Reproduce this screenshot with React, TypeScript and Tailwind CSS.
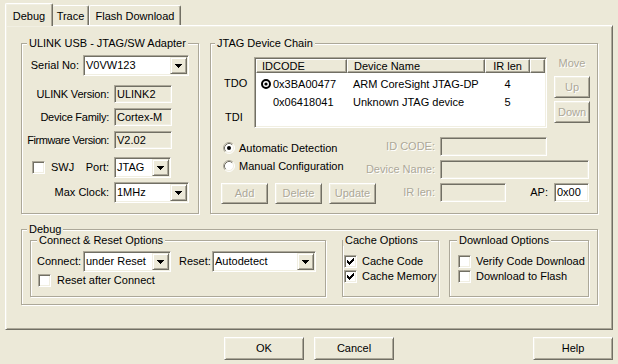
import React from "react";

const SUNKEN =
  "border border-t-[#ACA899] border-l-[#ACA899] border-b-white border-r-white shadow-[inset_1px_1px_0_#716F64,inset_-1px_-1px_0_#F1EFE2]";
const RAISED =
  "border border-t-white border-l-white border-b-[#716F64] border-r-[#716F64] shadow-[inset_1px_1px_0_#F1EFE2,inset_-1px_-1px_0_#ACA899]";
const ARROWBTN =
  "border border-t-[#F1EFE2] border-l-[#F1EFE2] border-b-[#716F64] border-r-[#716F64] shadow-[inset_1px_1px_0_#fff,inset_-1px_-1px_0_#ACA899]";
const HDR =
  "border border-t-white border-l-white border-b-[#716F64] border-r-[#716F64] shadow-[inset_-1px_-1px_0_#ACA899] bg-[#ECE9D8]";
const DIS = "text-[#ACA899] [text-shadow:1px_1px_0_#fff]";

function Arrow() {
  return (
    <svg width="7" height="4" viewBox="0 0 7 4" shapeRendering="crispEdges">
      <path d="M0 0h7v1H0z M1 1h5v1H1z M2 2h3v1H2z M3 3h1v1H3z" fill="#000" />
    </svg>
  );
}

function Combo({ value, className }: { value: string; className: string }) {
  return (
    <div className={`flex h-[21px] bg-white p-[1px] shrink-0 ${SUNKEN} ${className}`}>
      <div className="flex-1 pl-[1px] leading-[17px] whitespace-nowrap overflow-hidden">{value}</div>
      <div className={`w-[17px] h-[17px] flex items-center justify-center bg-[#ECE9D8] ${ARROWBTN}`}>
        <Arrow />
      </div>
    </div>
  );
}

function Field({ value, className, white }: { value?: string; className: string; white?: boolean }) {
  return (
    <div
      className={`pl-[2px] whitespace-nowrap shrink-0 flex items-center ${SUNKEN} ${
        white ? "bg-white" : "bg-[#ECE9D8]"
      } ${className}`}
    >
      {value}
    </div>
  );
}

function Btn({ label, className, disabled }: { label: string; className: string; disabled?: boolean }) {
  return (
    <div
      className={`flex items-center justify-center bg-[#ECE9D8] shrink-0 ${RAISED} ${disabled ? DIS : ""} ${className}`}
    >
      {label}
    </div>
  );
}

function Check({ checked, className = "" }: { checked?: boolean; className?: string }) {
  return (
    <div className={`w-[13px] h-[13px] bg-white shrink-0 flex items-center justify-center ${SUNKEN} ${className}`}>
      {checked && (
        <svg width="7" height="7" viewBox="0 0 7 7" shapeRendering="crispEdges">
          <path
            d="M0 2h1v3H0z M1 3h1v3H1z M2 4h1v3H2z M3 3h1v3H3z M4 2h1v3H4z M5 1h1v3H5z M6 0h1v3H6z"
            fill="#000"
          />
        </svg>
      )}
    </div>
  );
}

function Radio({ checked, className = "" }: { checked?: boolean; className?: string }) {
  return (
    <svg width="12" height="12" viewBox="0 0 12 12" className={`shrink-0 ${className}`}>
      <circle cx="6" cy="6" r="5" fill="#fff" />
      <path d="M9.89 2.11 A5.5 5.5 0 0 0 2.11 9.89" stroke="#ACA899" fill="none" />
      <path d="M9.18 2.82 A4.5 4.5 0 0 0 2.82 9.18" stroke="#716F64" fill="none" />
      <path d="M2.11 9.89 A5.5 5.5 0 0 0 9.89 2.11" stroke="#fff" fill="none" />
      <path d="M2.82 9.18 A4.5 4.5 0 0 0 9.18 2.82" stroke="#F1EFE2" fill="none" />
      {checked && <circle cx="6" cy="6" r="2" fill="#000" />}
    </svg>
  );
}

function Group({
  title,
  className,
  legendClass,
  children,
}: {
  title: string;
  className: string;
  legendClass: string;
  children?: React.ReactNode;
}) {
  return (
    <fieldset
      className={`border border-[#ACA899] shadow-[inset_1px_1px_0_#fff,1px_1px_0_#fff] min-w-0 p-0 m-0 shrink-0 ${className}`}
    >
      <legend className={`px-[2px] leading-[11px] h-[11px] bg-[#ECE9D8] whitespace-nowrap ${legendClass}`}>
        {title}
      </legend>
      {children}
    </fieldset>
  );
}

function RowLabel({ text, className }: { text: string; className: string }) {
  return <div className={`flex justify-end whitespace-nowrap shrink-0 ${className}`}>{text}</div>;
}

function ListView() {
  return (
    <div className={`w-[293px] h-[71px] bg-white p-[1px] shrink-0 ${SUNKEN}`}>
      <div className="flex h-[14px] leading-[12px]">
        <div className={`w-[91px] pl-[5px] ${HDR}`}>IDCODE</div>
        <div className={`w-[138px] pl-[6px] ${HDR}`}>Device Name</div>
        <div className={`w-[45px] text-center ${HDR}`}>IR len</div>
        <div className={`flex-1 ${HDR}`}></div>
      </div>
      <div className="pt-[2px]">
        <div className="flex h-[18px] items-center">
          <div className="w-[91px] flex items-center">
            <svg width="10" height="10" viewBox="0 0 10 10" className="ml-[5px] shrink-0">
              <circle cx="5" cy="5" r="4" stroke="#000" strokeWidth="2" fill="#fff" />
              <circle cx="5" cy="5" r="1.6" fill="#000" />
            </svg>
            <span className="ml-[2px]">0x3BA00477</span>
          </div>
          <div className="w-[138px] pl-[6px] whitespace-nowrap">ARM CoreSight JTAG-DP</div>
          <div className="w-[45px] text-center">4</div>
        </div>
        <div className="flex h-[18px] items-center">
          <div className="w-[91px] pl-[17px]">0x06418041</div>
          <div className="w-[138px] pl-[6px] whitespace-nowrap">Unknown JTAG device</div>
          <div className="w-[45px] text-center">5</div>
        </div>
      </div>
    </div>
  );
}

export default function App() {
  return (
    <div className="w-[618px] h-[364px] bg-[#ECE9D8] font-['Liberation_Sans',Arial,sans-serif] text-[11px] leading-[13px] text-black overflow-hidden px-[5px] pt-[3px]">
      {/* Tabs */}
      <div className="flex items-end h-[22px]">
        <div className="relative z-10 -mb-[1px] h-[23px] w-[48px] pt-[2px] flex items-center justify-center bg-[#ECE9D8] rounded-t-[2px] border-t border-l border-r border-t-white border-l-white border-r-[#716F64] shadow-[inset_-1px_0_0_#ACA899,inset_1px_1px_0_#F1EFE2]">
          Debug
        </div>
        <div className="h-[20px] w-[36px] pt-[1px] flex items-center justify-center rounded-t-[2px] border-t border-r border-t-white border-r-[#716F64] shadow-[inset_-1px_0_0_#ACA899]">
          Trace
        </div>
        <div className="h-[20px] w-[92px] pt-[1px] flex items-center justify-center rounded-t-[2px] border-t border-l border-r border-t-white border-l-white border-r-[#716F64] shadow-[inset_-1px_0_0_#ACA899]">
          Flash Download
        </div>
      </div>

      {/* Panel */}
      <div className="w-[608px] h-[305px] pt-[12px] pl-[15px] border border-t-white border-l-white border-b-[#716F64] border-r-[#716F64] shadow-[inset_1px_1px_0_#F1EFE2,inset_-1px_-1px_0_#ACA899]">
        <div className="flex">
          {/* ULINK group */}
          <Group title="ULINK USB - JTAG/SW Adapter" className="w-[178px] h-[176px]" legendClass="ml-[5px]">
            <div className="flex items-center mt-[6px] h-[21px]">
              <RowLabel text="Serial No:" className="w-[57px]" />
              <Combo value="V0VW123" className="ml-[4px] w-[106px]" />
            </div>
            <div className="flex items-center mt-[9px]">
              <RowLabel text="ULINK Version:" className="w-[87px] tracking-[-0.2px]" />
              <Field value="ULINK2" className="ml-[5px] w-[58px] h-[18px]" />
            </div>
            <div className="flex items-center mt-[5px]">
              <RowLabel text="Device Family:" className="w-[87px] tracking-[-0.25px]" />
              <Field value="Cortex-M" className="ml-[5px] w-[58px] h-[18px]" />
            </div>
            <div className="flex items-center mt-[5px]">
              <RowLabel text="Firmware Version:" className="w-[87px] tracking-[-0.4px]" />
              <Field value="V2.02" className="ml-[5px] w-[58px] h-[18px]" />
            </div>
            <div className="flex items-center mt-[8px] h-[21px]">
              <div className="w-[87px] flex items-center shrink-0">
                <Check className="ml-[10px]" />
                <span className="ml-[6px]">SWJ</span>
                <span className="ml-auto">Port:</span>
              </div>
              <Combo value="JTAG" className="ml-[5px] w-[57px]" />
            </div>
            <div className="flex items-center mt-[4px] h-[21px]">
              <RowLabel text="Max Clock:" className="w-[87px]" />
              <Combo value="1MHz" className="ml-[5px] w-[75px]" />
            </div>
          </Group>

          {/* JTAG group */}
          <Group title="JTAG Device Chain" className="ml-[11px] w-[388px] h-[176px]" legendClass="ml-[4px]">
            <div className="flex mt-[8px]">
              <div className="w-[43px] pl-[13px] flex flex-col shrink-0">
                <span className="mt-[20px] leading-[13px]">TDO</span>
                <span className="mt-[21px] leading-[13px] pl-[1px]">TDI</span>
              </div>
              <ListView />
              <div className="ml-[7px] w-[36px] flex flex-col shrink-0">
                <div className={`text-center leading-[13px] ${DIS}`}>Move</div>
                <Btn label="Up" disabled className="mt-[6px] h-[22px]" />
                <Btn label="Down" disabled className="mt-[3px] h-[22px]" />
              </div>
            </div>
            <div className="flex">
              <div className="w-[165px] pl-[10px] pt-[11px] shrink-0">
                <div className="flex items-center h-[18px]">
                  <Radio checked className="ml-[2px]" />
                  <span className="ml-[4px] whitespace-nowrap">Automatic Detection</span>
                </div>
                <div className="flex items-center h-[18px]">
                  <Radio className="ml-[2px]" />
                  <span className="ml-[4px] whitespace-nowrap">Manual Configuration</span>
                </div>
                <div className="flex mt-[8px]">
                  <Btn label="Add" disabled className="w-[47px] h-[21px]" />
                  <Btn label="Delete" disabled className="ml-[7px] w-[47px] h-[21px]" />
                  <Btn label="Update" disabled className="ml-[7px] w-[47px] h-[21px]" />
                </div>
              </div>
              <div className="pt-[9px] w-[213px] shrink-0">
                <div className="flex items-center">
                  <RowLabel text="ID CODE:" className={`w-[59px] ${DIS}`} />
                  <Field className="ml-[5px] w-[107px] h-[19px]" />
                </div>
                <div className="flex items-center mt-[4px]">
                  <RowLabel text="Device Name:" className={`w-[59px] ${DIS}`} />
                  <Field className="ml-[5px] w-[149px] h-[19px]" />
                </div>
                <div className="flex items-center mt-[4px]">
                  <RowLabel text="IR len:" className={`w-[59px] ${DIS}`} />
                  <Field className="ml-[5px] w-[66px] h-[19px]" />
                  <RowLabel text="AP:" className="flex-1 pr-[6px]" />
                  <Field value="0x00" white className="w-[35px] h-[19px]" />
                </div>
              </div>
            </div>
          </Group>
        </div>

        {/* Debug group */}
        <Group title="Debug" className="mt-[10px] w-[577px] h-[81px]" legendClass="ml-[5px]">
          <div className="flex pl-[8px]">
            <Group title="Connect & Reset Options" className="w-[296px] h-[62px]" legendClass="ml-[6px]">
              <div className="flex items-center mt-[5px] h-[21px]">
                <div className="w-[52px] pl-[6px] shrink-0">Connect:</div>
                <Combo value="under Reset" className="w-[88px]" />
                <div className="ml-[8px] w-[33px] shrink-0">Reset:</div>
                <Combo value="Autodetect" className="w-[104px]" />
              </div>
              <div className="flex items-center mt-[2px] pl-[7px] h-[13px]">
                <Check />
                <span className="ml-[6px] whitespace-nowrap">Reset after Connect</span>
              </div>
            </Group>
            <Group title="Cache Options" className="ml-[16px] w-[97px] h-[62px]" legendClass="ml-0">
              <div className="flex items-center mt-[9px] pl-[1px] h-[13px]">
                <Check checked />
                <span className="ml-[5px] whitespace-nowrap">Cache Code</span>
              </div>
              <div className="flex items-center mt-[2px] pl-[1px] h-[13px]">
                <Check checked />
                <span className="ml-[5px] whitespace-nowrap">Cache Memory</span>
              </div>
            </Group>
            <Group title="Download Options" className="ml-[10px] w-[140px] h-[62px]" legendClass="ml-[7px]">
              <div className="flex items-center mt-[9px] pl-[8px] h-[13px]">
                <Check />
                <span className="ml-[5px] whitespace-nowrap">Verify Code Download</span>
              </div>
              <div className="flex items-center mt-[2px] pl-[8px] h-[13px]">
                <Check />
                <span className="ml-[5px] whitespace-nowrap">Download to Flash</span>
              </div>
            </Group>
          </div>
        </Group>
      </div>

      {/* Dialog buttons */}
      <div className="flex mt-[7px]">
        <Btn label="OK" className="ml-[219px] w-[80px] h-[23px]" />
        <Btn label="Cancel" className="ml-[10px] w-[80px] h-[23px]" />
        <Btn label="Help" className="ml-auto w-[80px] h-[23px]" />
      </div>
    </div>
  );
}
